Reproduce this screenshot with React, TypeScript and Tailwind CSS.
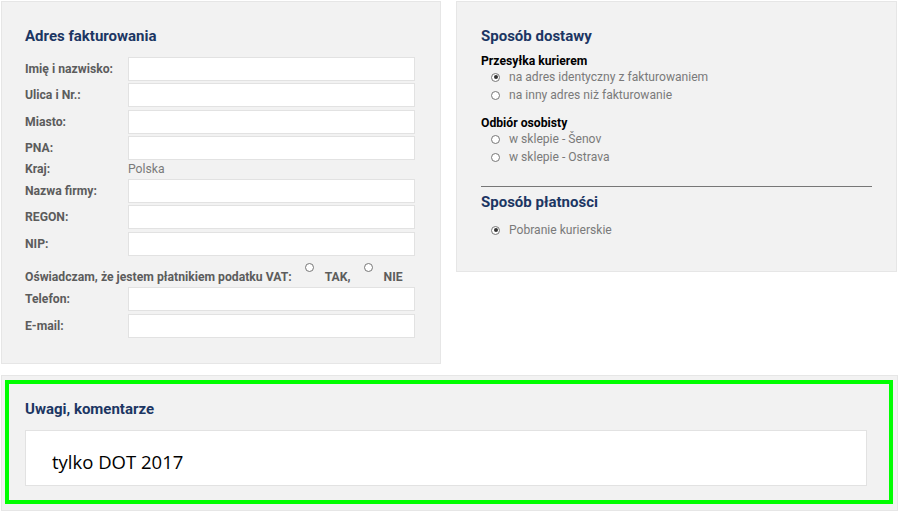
import React from "react";

function Radio({ checked = false }: { checked?: boolean }) {
  return (
    <span className="inline-flex h-[9px] w-[9px] shrink-0 items-center justify-center rounded-full border border-[#777] bg-white">
      {checked && <span className="h-[4px] w-[4px] rounded-full bg-[#333]" />}
    </span>
  );
}

function Field({ label, mt }: { label: string; mt: string }) {
  return (
    <div className={`flex h-[24px] items-center ${mt}`}>
      <div className="w-[103px] shrink-0 text-[12.2px] font-bold text-[#5c5c5c]">{label}</div>
      <div className="h-[24px] flex-1 border border-[#e2e2e2] bg-white" />
    </div>
  );
}

function Option({ text, checked = false }: { text: string; checked?: boolean }) {
  return (
    <div className="flex h-[18px] items-center pl-[10px]">
      <Radio checked={checked} />
      <span className="ml-[9px] text-[12.1px] text-[#7a7a7a]">{text}</span>
    </div>
  );
}

export default function App() {
  return (
    <div className="h-[515px] w-[900px] overflow-hidden bg-white pl-[1px] pt-[1px] font-['Roboto',sans-serif]">
      <div className="flex items-start gap-[15px]">
        <div className="h-[363px] w-[440px] border border-[#e6e6e6] bg-[#f2f2f2] pl-[23px] pr-[25px] pt-[25px]">
          <h2 className="text-[15px] font-bold leading-[18px] text-[#1c3663]">Adres fakturowania</h2>
          <div className="mt-[12px] flex flex-col">
            <Field label="Imię i nazwisko:" mt="mt-0" />
            <Field label="Ulica i Nr.:" mt="mt-[2px]" />
            <Field label="Miasto:" mt="mt-[3px]" />
            <Field label="PNA:" mt="mt-[2px]" />
            <div className="flex h-[19px] items-center">
              <div className="w-[103px] shrink-0 text-[12.2px] font-bold text-[#5c5c5c]">Kraj:</div>
              <div className="text-[12.2px] text-[#7a7a7a]">Polska</div>
            </div>
            <Field label="Nazwa firmy:" mt="mt-0" />
            <Field label="REGON:" mt="mt-[2px]" />
            <Field label="NIP:" mt="mt-[3px]" />
            <div className="flex h-[31px] items-end pb-[2px] text-[12.2px] font-bold leading-[16px] text-[#5c5c5c]">
              <span>Oświadczam, że jestem płatnikiem podatku VAT:</span>
              <span className="relative top-[-9px] ml-[13px]"><Radio /></span>
              <span className="ml-[11px]">TAK,</span>
              <span className="relative top-[-9px] ml-[13px]"><Radio /></span>
              <span className="ml-[11px]">NIE</span>
            </div>
            <Field label="Telefon:" mt="mt-0" />
            <Field label="E-mail:" mt="mt-[3px]" />
          </div>
        </div>
        <div className="h-[271px] w-[441px] border border-[#e6e6e6] bg-[#f2f2f2] px-[24px] pt-[25px]">
          <h2 className="text-[15px] font-bold leading-[18px] text-[#1c3663]">Sposób dostawy</h2>
          <div className="mt-[10px] text-[12.2px] font-bold leading-[13px] text-black">Przesyłka kurierem</div>
          <Option text="na adres identyczny z fakturowaniem" checked />
          <Option text="na inny adres niż fakturowanie" />
          <div className="mt-[13px] text-[12.2px] font-bold leading-[13px] text-black">Odbiór osobisty</div>
          <Option text="w sklepie - Šenov" />
          <Option text="w sklepie - Ostrava" />
          <div className="mt-[20px] border-t border-[#777]" />
          <h2 className="mt-[6px] text-[15px] font-bold leading-[18px] text-[#1c3663]">Sposób płatności</h2>
          <div className="mt-[10px]">
            <Option text="Pobranie kurierskie" checked />
          </div>
        </div>
      </div>
      <div className="mt-[11px] h-[136px] w-[897px] border border-[#e6e6e6] bg-[#f2f2f2] pl-[3px] pt-[4px]">
        <div className="h-[124px] w-[888px] border-[4px] border-[#00ff00] pl-[16px] pt-[16px]">
          <h2 className="text-[15px] font-bold leading-[18px] text-[#1c3663]">Uwagi, komentarze</h2>
          <div className="mt-[12px] flex h-[56px] w-[842px] items-center border border-[#e2e2e2] bg-white pl-[26px] pt-[8px] font-['Open_Sans',sans-serif] text-[18.5px] text-black">
            tylko DOT 2017
          </div>
        </div>
      </div>
    </div>
  );
}
